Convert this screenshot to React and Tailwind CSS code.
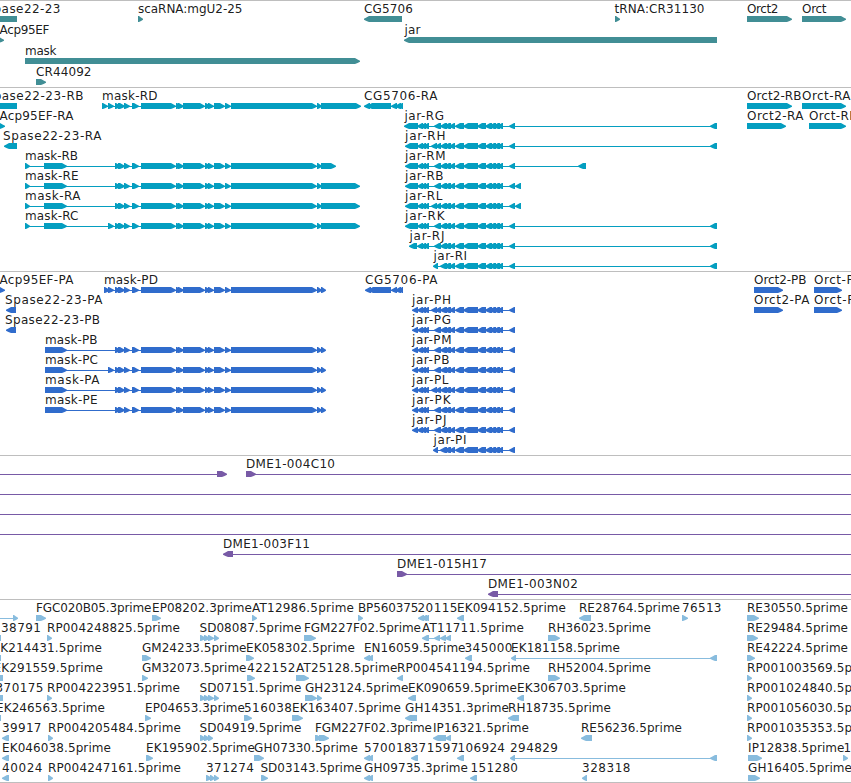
import React from 'react';

const FAR = 900; // past the right edge of the view

// Exon sets shared by several transcripts
const maskCore = [
  [115, 121], [118, 125], [124, 130], [132, 139], [141, 176], [176, 182], [178, 184], [183, 205],
  [205, 211], [208, 214], [214, 225], [225, 231], [231, 317], [317, 322],
];
const jarTail = [[417, 423], [420, 426], [423, 429]];
const jarG = [[434, 441]];
const jarH = [[431, 437], [435, 441]];
const jarCore = [
  [440, 447], [444, 451], [449, 455], [455, 464], [463, 478], [477, 486], [485, 492], [489, 496],
  [493, 500], [497, 503], [509, 515],
];

// label: [text, left, right], exons: [[start, end], ...], line: [start, end]
const f = (dir, exons, label, line) => ({ dir, exons, label, line });

const maskR = (name, right, extra, end) =>
  f('r', [[25, 30], [44, 67], ...extra, ...maskCore, [321, end]], [name, 25.5, right]);
const maskP = (name, right, extra = []) =>
  f('r', [[45, 67], ...extra, ...maskCore, [321, 326]], [name, 45.5, right]);
const jarR = (name, left, right, start, gap, last) =>
  f('l', [start, ...jarTail, ...gap, ...jarCore, last], [name, left, right]);
const jarP = (name, right, gap = jarG) =>
  f('l', [[412, 418], ...jarTail, ...gap, ...jarCore], [name, 412.5, right]);

const tracks = [
  {
    id: 'genes',
    color: 'text-[#418e95]',
    tall: true,
    rows: [
      [
        f('l', [[-14, 17]], ['Spase22-23', -14, 60]),
        f('r', [[138, 143]], ['scaRNA:mgU2-25', 138.5, 242]),
        f('l', [[364, 402]], ['CG5706', 364.5, 412.5]),
        f('r', [[615, 620]], ['tRNA:CR31130', 615, 704]),
        f('r', [[747, 792]], ['Orct2', 747.5, 778]),
        f('r', [[802, 846]], ['Orct', 802.5, 826]),
      ],
      [
        f('r', [[-5, 4]], ['Acp95EF', 0, 49]),
        f('l', [[404, 717]], ['jar', 405, 420]),
      ],
      [f('r', [[25, 360]], ['mask', 25.5, 56])],
      [f('r', [[36, 46]], ['CR44092', 36.5, 91])],
    ],
  },
  {
    id: 'transcripts',
    color: 'text-[#049ec0]',
    rows: [
      [
        f('l', [[-14, 17]], ['Spase22-23-RB', -14, 83]),
        f('r', [[102, 108], [108, 114], ...maskCore, [321, 361]], ['mask-RD', 102.5, 157]),
        f('l', [[364, 370], [367, 391], [391, 397], [395, 401], [398, 403]], ['CG5706-RA', 364.5, 437]),
        f('r', [[747, 792]], ['Orct2-RB', 747.5, 801]),
        f('r', [[802, 846]], ['Orct-RA', 802.5, 850]),
      ],
      [
        f('r', [[-5, 5]], ['Acp95EF-RA', 0, 73]),
        jarR('jar-RG', 405, 443.5, [404, 418], jarG, [710, 717]),
        f('r', [[747, 786]], ['Orct2-RA', 747.5, 803]),
        f('r', [[809, 846]], ['Orct-RB', 809.5, 857]),
      ],
      [
        f('l', [[4, 17]], ['Spase22-23-RA', 3.5, 101]),
        jarR('jar-RH', 405.5, 445, [405, 418], jarH, [710, 717]),
      ],
      [
        maskR('mask-RB', 77.5, [], 336),
        jarR('jar-RM', 405.5, 445, [405, 418], jarG, [578, 586]),
      ],
      [
        maskR('mask-RE', 78, [], 360),
        jarR('jar-RB', 405.5, 443, [405, 418], jarG, [515, 521]),
      ],
      [
        maskR('mask-RA', 80, [], 360),
        jarR('jar-RL', 405.5, 442, [405, 418], jarH, [515, 521]),
      ],
      [
        maskR('mask-RC', 78, [[108, 114]], 360),
        jarR('jar-RK', 405.5, 444, [405, 418], jarG, [710, 717]),
      ],
      [jarR('jar-RJ', 410, 444, [409, 417], jarG, [710, 717])],
      [f('l', [[433, 438], ...jarCore, [710, 717]], ['jar-RI', 434, 466.5])],
    ],
  },
  {
    id: 'proteins',
    color: 'text-[#306ccc]',
    rows: [
      [
        f('r', [[-5, 5]], ['Acp95EF-PA', 0, 73]),
        f('r', [[104, 110], [108, 114], ...maskCore, [321, 326]], ['mask-PD', 104.5, 157.5]),
        f('l', [[365, 371], [368, 391], [391, 397], [395, 401], [399, 403]], ['CG5706-PA', 365.5, 437]),
        f('r', [[754, 783]], ['Orct2-PB', 754.5, 806]),
        f('r', [[814, 842]], ['Orct-PB', 814.5, 862]),
      ],
      [
        f('l', [[6, 16]], ['Spase22-23-PA', 5.5, 102]),
        jarP('jar-PH', 450.5, jarH),
        f('r', [[754, 783]], ['Orct2-PA', 754.5, 809]),
        f('r', [[814, 842]], ['Orct-PA', 814.5, 862]),
      ],
      [
        f('l', [[6, 16]], ['Spase22-23-PB', 5.5, 99.5]),
        jarP('jar-PG', 450.5),
      ],
      [maskP('mask-PB', 97), jarP('jar-PM', 451)],
      [maskP('mask-PC', 97.5, [[108, 114]]), jarP('jar-PB', 449)],
      [maskP('mask-PA', 99), jarP('jar-PL', 448, jarH)],
      [maskP('mask-PE', 97), jarP('jar-PK', 450)],
      [jarP('jar-PJ', 446)],
      [f('l', [[433, 438], ...jarCore], ['jar-PI', 434, 466])],
    ],
  },
  {
    id: 'clones',
    color: 'text-[#785aa6]',
    rows: [
      [
        f('r', [[217, 227]], null, [-10, 220]),
        f('r', [[246, 256]], ['DME1-004C10', 246.5, 334.5], [246, FAR]),
      ],
      [f('r', [], null, [-10, FAR])],
      [f('r', [], null, [-10, FAR])],
      [f('r', [], null, [-10, FAR])],
      [f('l', [[223, 233]], ['DME1-003F11', 223.5, 309.5], [230, FAR])],
      [f('r', [[397, 407]], ['DME1-015H17', 397.5, 486.5], [397, FAR])],
      [f('l', [[488, 498]], ['DME1-003N02', 488.5, 577.5], [492, FAR])],
    ],
  },
  {
    id: 'ests',
    color: 'text-[#88bcde]',
    last: true,
    rows: [
      [
        f('r', [[13, 18]], null, [-10, 16]),
        f('r', [[36, 46]], ['FGC020B05.3prime', 36.5, 151]),
        f('r', [[152, 161]], ['EP08202.3prime', 152.5, 251.5]),
        f('r', [[252, 257]], ['AT12986.5prime', 252.5, 353.5]),
        f('r', [[358, 363]], ['BP560375', 358.5, 418]),
        f('l', [[418, 424], [421, 427], [424, 429]], ['20115', 418, 457]),
        f('l', [[457, 464]], ['EK094152.5prime', 457.5, 565.5]),
        f('l', [[579, 591]], ['RE28764.5prime', 579.5, 679.5]),
        f('r', [[682, 688]], ['76513', 682.5, 721]),
        f('r', [[747, 759]], ['RE30550.5prime', 747.5, 847.5]),
      ],
      [
        f('l', [[-8, 1]], ['38791', 1.5, 40.5]),
        f('r', [[47, 52]], ['RP004248825.5prime', 47.5, 179.5]),
        f('r', [[200, 206], [204, 210], [208, 214], [214, 219]], ['SD08087.5prime', 200, 301]),
        f('r', [[304, 316]], ['FGM227F02.5prime', 304.5, 420.5]),
        f('l', [[422, 429], [434, 440], [440, 446], [445, 451]], ['AT11711.5prime', 422.5, 523.5]),
        f('r', [[548, 560]], ['RH36023.5prime', 548.5, 650.5]),
        f('r', [[747, 758]], ['RE29484.5prime', 747.5, 847.5]),
      ],
      [
        f('l', [[-8, 1]], ['EK214431.5prime', -7, 101.5]),
        f('r', [[142, 151]], ['GM24233.5prime', 142.5, 246]),
        f('r', [[246, 254]], ['EK058302.5prime', 246.5, 354.5]),
        f('l', [[364, 370], [367, 373]], ['EN16059.5prime', 364.5, 465]),
        f('l', [[465, 472]], ['345000', 465, 512]),
        f('l', [[511, 516], [710, 717]], ['EK181158.5prime', 511.5, 619.5]),
        f('r', [[747, 755]], ['RE42224.5prime', 747.5, 847.5]),
      ],
      [
        f('l', [[-8, 3]], ['EK291559.5prime', -6, 102.5]),
        f('r', [[142, 148]], ['GM32073.5prime', 142.5, 246]),
        f('r', [[247, 255]], ['422152', 247.5, 295]),
        f('r', [[296, 309]], ['AT25128.5prime', 296.5, 397]),
        f('l', [[397, 403]], ['RP004541194.5prime', 397.5, 529.5]),
        f('r', [[548, 560]], ['RH52004.5prime', 548.5, 650.5]),
        f('r', [[747, 752]], ['RP001003569.5prime', 747.5, 879.5]),
      ],
      [
        f('l', [[-8, 3]], ['370175', -4, 43]),
        f('r', [[47, 52]], ['RP004223951.5prime', 47.5, 179.5]),
        f('r', [[200, 206], [204, 210], [208, 214], [214, 219]], ['SD07151.5prime', 200, 301]),
        f('r', [[305, 317], [317, 322]], ['GH23124.5prime', 305.5, 408]),
        f('l', [[408, 416]], ['EK090659.5prime', 408.5, 516.5]),
        f('l', [[517, 524]], ['EK306703.5prime', 517.5, 625.5]),
        f('r', [[747, 752]], ['RP001024840.5prime', 747.5, 879.5]),
      ],
      [
        f('l', [[-8, 1]], ['EK246563.5prime', -3.5, 104.5]),
        f('r', [[145, 151]], ['EP04653.3prime', 145.5, 244.5]),
        f('r', [[244, 252]], ['516038', 244.5, 291.5]),
        f('r', [[292, 303]], ['EK163407.5prime', 292.5, 400.5]),
        f('l', [[405, 417]], ['GH14351.3prime', 405.5, 508.5]),
        f('l', [[508, 519]], ['RH18735.5prime', 508.5, 610.5]),
        f('r', [[747, 752]], ['RP001056030.5prime', 747.5, 879.5]),
      ],
      [
        f('l', [[2, 9]], ['39917', 2.5, 41]),
        f('r', [[48, 53]], ['RP004205484.5prime', 48.5, 180.5]),
        f('r', [[200, 206], [204, 210], [208, 213]], ['SD04919.5prime', 200, 301]),
        f('r', [[315, 322], [319, 329]], ['FGM227F02.3prime', 315.5, 431.5]),
        f('l', [[433, 446], [445, 451]], ['IP16321.5prime', 433.5, 528.5]),
        f('l', [[581, 592]], ['RE56236.5prime', 581.5, 681.5]),
        f('r', [[747, 752]], ['RP001035353.5prime', 747.5, 879.5]),
      ],
      [
        f('l', [[2, 9]], ['EK046038.5prime', 2.5, 110.5]),
        f('r', [[146, 153]], ['EK195902.5prime', 146.5, 254.5]),
        f('r', [[254, 264]], ['GH07330.5prime', 254.5, 357.5]),
        f('l', [[364, 370], [367, 373]], ['570018', 364.5, 411]),
        f('l', [[411, 418]], ['371597', 411, 458]),
        f('l', [[457, 464]], ['106924', 458, 504.5]),
        f('l', [[510, 515], [710, 717]], ['294829', 510.5, 557.5]),
        f('r', [[748, 762]], ['IP12838.5prime', 748.5, 844]),
        f('r', [[843, 848]], ['1', 844, 850.5]),
      ],
      [
        f('l', [[2, 9]], ['40024', 2.5, 42]),
        f('r', [[48, 53]], ['RP004247161.5prime', 48.5, 180.5]),
        f('r', [[206, 212], [210, 215], [214, 219]], ['371274', 206.5, 253.5]),
        f('r', [[261, 268]], ['SD03143.5prime', 261, 361.5]),
        f('l', [[364, 370], [367, 373]], ['GH09735.3prime', 364.5, 467.5]),
        f('l', [[470, 477]], ['151280', 471, 517.5]),
        f('l', [[582, 587]], ['328318', 582.5, 630]),
        f('r', [[748, 760]], ['GH16405.5prime', 748.5, 851.5]),
      ],
    ],
  },
];

// Block with a bullet shaped end, 6px high, top at y=15
const exonPoints = (dir, [start, end]) => {
  const head = Math.min(6, end - start);
  const back = dir === 'r' ? start : end;
  const tip = dir === 'r' ? end : start;
  const sign = dir === 'r' ? -1 : 1;
  const neck = tip + sign * (head - 1);
  const mid = tip + sign * head * 0.4;
  return `${back},15 ${neck},15 ${mid},16.5 ${tip},17.7 ${tip},18.7 ${mid},19.9 ${neck},21 ${back},21`;
};

const Feature = ({ feature }) => {
  const { dir, exons, label } = feature;
  const line = feature.line || (exons.length > 1 ? [exons[0][0] + 2, exons[exons.length - 1][1] - 1] : null);

  return (
    <g>
      {line && <rect x={line[0]} y="18" width={line[1] - line[0]} height="1" fill="currentColor" />}
      {exons.map((exon, i) => (
        <polygon key={i} points={exonPoints(dir, exon)} fill="currentColor" />
      ))}
      {label && (
        <text
          x={label[1] - 0.5}
          y="12"
          textLength={label[2] - label[1] + 1}
          className="fill-black/90 text-[12px]"
        >
          {label[0]}
        </text>
      )}
    </g>
  );
};

const Track = ({ track }) => (
  <section className={`border-t border-[#bebebe] ${track.tall || track.last ? 'pb-[2px]' : 'pb-[3px]'} ${track.color}`}>
    {track.rows.map((row, i) => (
      <svg key={i} width="851" height={track.tall ? 21 : 20} className="block w-full overflow-visible">
        {row.map((feature, j) => (
          <Feature key={j} feature={feature} />
        ))}
      </svg>
    ))}
  </section>
);

const App = () => {
  return (
    <main className="w-[851px] h-[783px] overflow-hidden bg-white border-b border-[#bebebe] font-['DejaVu_Sans',sans-serif]">
      {tracks.map((track) => (
        <Track key={track.id} track={track} />
      ))}
    </main>
  );
};

export default App;
